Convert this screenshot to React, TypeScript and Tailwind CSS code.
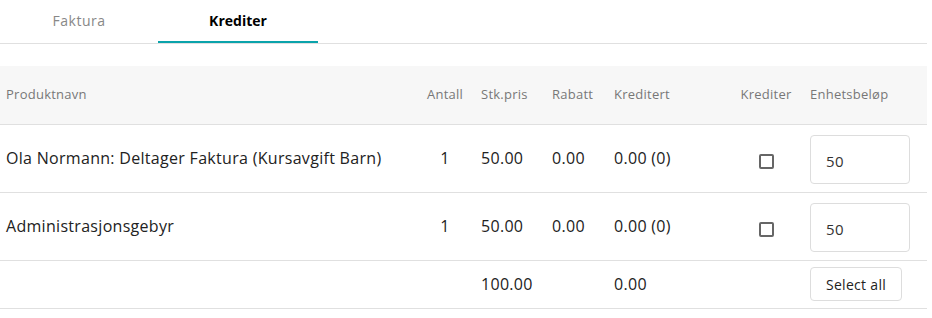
import { useState } from "react";

type Line = {
  name: string;
  qty: number;
  price: string;
  discount: string;
  credited: string;
  amount: string;
};

const lines: Line[] = [
  { name: "Ola Normann: Deltager Faktura (Kursavgift Barn)", qty: 1, price: "50.00", discount: "0.00", credited: "0.00 (0)", amount: "50" },
  { name: "Administrasjonsgebyr", qty: 1, price: "50.00", discount: "0.00", credited: "0.00 (0)", amount: "50" },
];

export default function App() {
  const [tab, setTab] = useState("krediter");
  const [checked, setChecked] = useState<boolean[]>(lines.map(() => false));
  const [amounts, setAmounts] = useState(lines.map((line) => line.amount));

  const toggle = (index: number) => {
    setChecked((prev) => prev.map((value, i) => (i === index ? !value : value)));
  };

  return (
    <main className="h-[318px] w-[927px] bg-white font-['Open_Sans',sans-serif] text-[#222]">
      <div className="flex h-[44px] border-b border-[#e0e0e0]">
        <button
          type="button"
          onClick={() => setTab("faktura")}
          className={`w-[158px] border-b-2 text-[14px] ${
            tab === "faktura" ? "border-[#0aa3ab] font-bold text-black" : "border-transparent tracking-[0.5px] text-[#888]"
          }`}
        >
          Faktura
        </button>
        <button
          type="button"
          onClick={() => setTab("krediter")}
          className={`w-[160px] border-b-2 text-[14px] ${
            tab === "krediter" ? "border-[#0aa3ab] font-bold text-black" : "border-transparent tracking-[0.5px] text-[#888]"
          }`}
        >
          Krediter
        </button>
      </div>

      <table className="mt-[22px] w-full table-fixed border-collapse">
        <colgroup>
          <col className="w-[415px]" />
          <col className="w-[60px]" />
          <col className="w-[71px]" />
          <col className="w-[62px]" />
          <col className="w-[120px]" />
          <col className="w-[76px]" />
          <col />
        </colgroup>
        <thead>
          <tr className="h-[58px] border-b border-[#e0e0e0] bg-[#f7f7f7] text-[13px] tracking-[0.25px] text-[#777]">
            <th className="px-1.5 text-left font-normal">Produktnavn</th>
            <th className="px-1.5 text-center font-normal">Antall</th>
            <th className="px-1.5 text-left font-normal">Stk.pris</th>
            <th className="px-1.5 text-left font-normal">Rabatt</th>
            <th className="px-1.5 text-left font-normal">Kreditert</th>
            <th className="px-1.5 text-center font-normal">Krediter</th>
            <th className="px-1.5 text-left font-normal">Enhetsbeløp</th>
          </tr>
        </thead>
        <tbody className="tracking-[0.3px]">
          {lines.map((line, index) => (
            <tr key={line.name} className="h-[68px] border-b border-[#e0e0e0] text-[16px]">
              <td className="px-1.5">{line.name}</td>
              <td className="px-1.5 text-center">{line.qty}</td>
              <td className="px-1.5">{line.price}</td>
              <td className="px-1.5">{line.discount}</td>
              <td className="px-1.5">{line.credited}</td>
              <td className="px-1.5 text-center">
                <button
                  type="button"
                  onClick={() => toggle(index)}
                  className="inline-flex h-[15px] w-[15px] translate-y-[2px] items-center justify-center rounded-[2px] border-2 border-[#666] bg-white align-middle"
                >
                  {checked[index] && <span className="h-[7px] w-[7px] bg-[#666]" />}
                </button>
              </td>
              <td className="px-1.5">
                <input
                  type="text"
                  value={amounts[index]}
                  onChange={(event) =>
                    setAmounts((prev) => prev.map((value, i) => (i === index ? event.target.value : value)))
                  }
                  className="mt-[2px] h-[49px] w-[100px] rounded border border-[#ddd] px-[15px] pt-[4px] text-[15px] text-[#333] outline-none"
                />
              </td>
            </tr>
          ))}
          <tr className="h-[48px] border-b border-[#e0e0e0] text-[16px]">
            <td className="px-1.5" />
            <td className="px-1.5" />
            <td className="px-1.5">100.00</td>
            <td className="px-1.5" />
            <td className="px-1.5">0.00</td>
            <td className="px-1.5" />
            <td className="px-1.5">
              <button
                type="button"
                onClick={() => setChecked(lines.map(() => true))}
                className="h-[34px] w-[92px] rounded border border-[#ddd] bg-white text-[14px] text-[#222]"
              >
                Select all
              </button>
            </td>
          </tr>
        </tbody>
      </table>
    </main>
  );
}
